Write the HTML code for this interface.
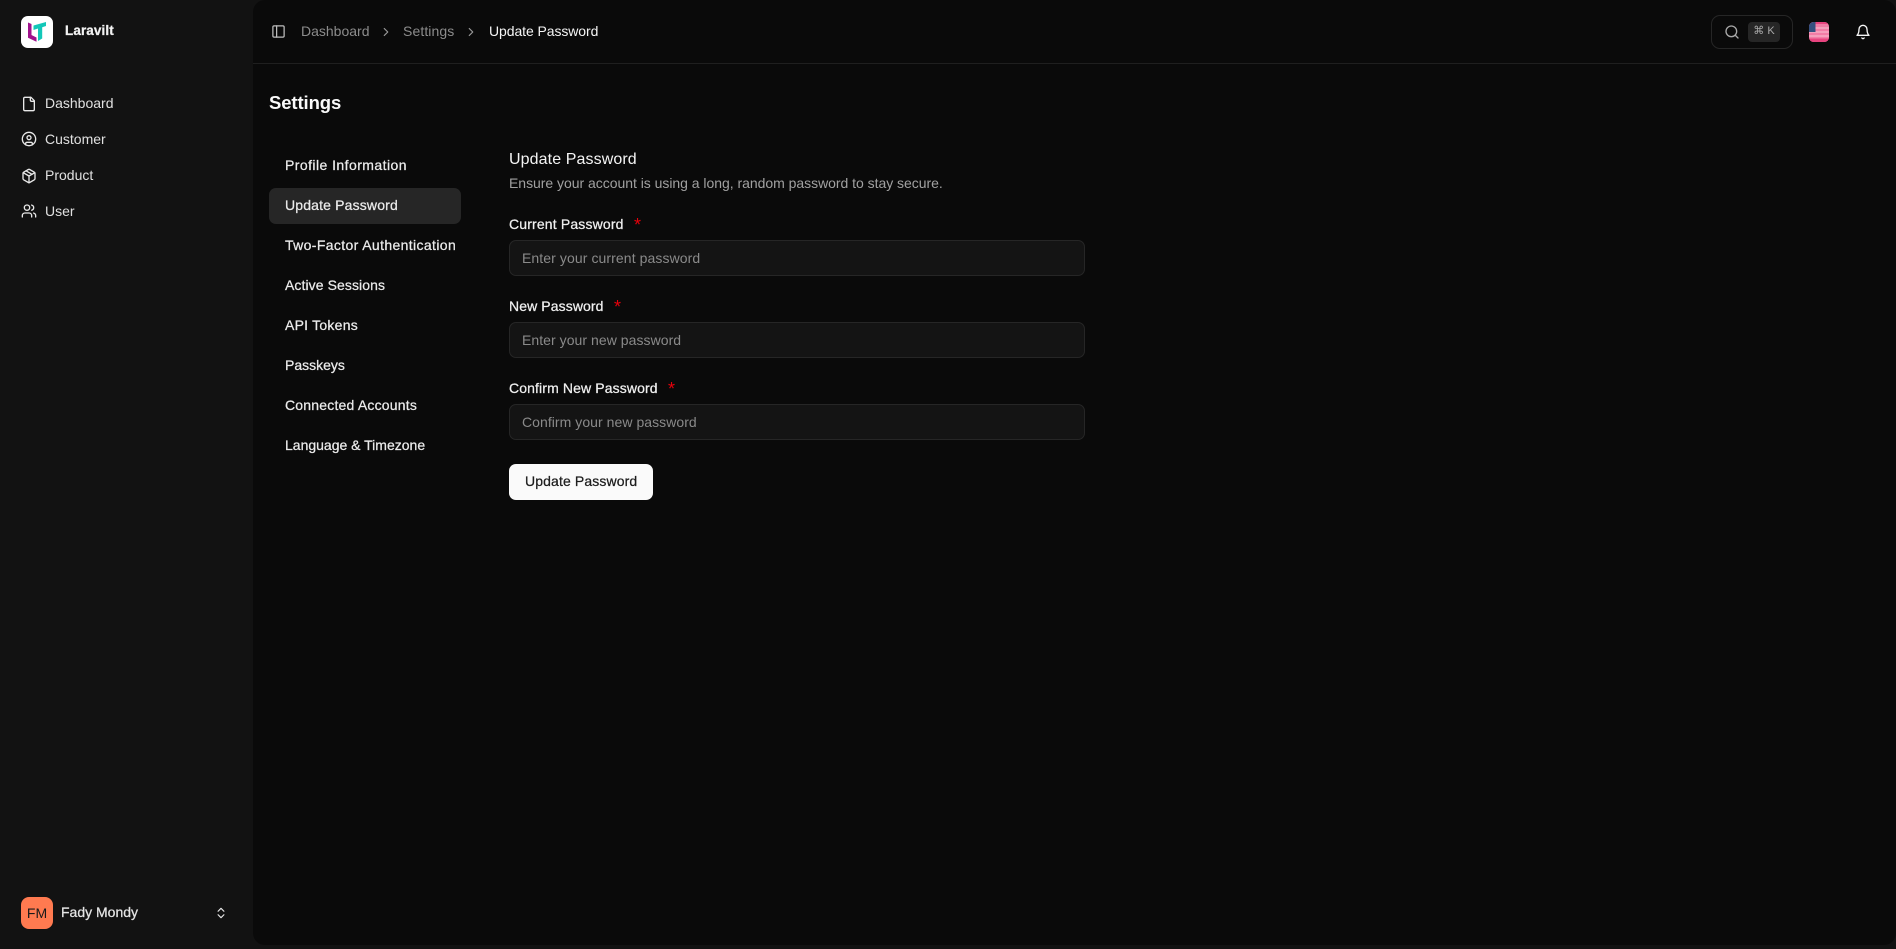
<!DOCTYPE html>
<html lang="en">
<head>
<meta charset="utf-8">
<title>Update Password</title>
<style>
html,body{margin:0;padding:0;width:1896px;height:949px;overflow:hidden;background:#121212;font-family:"Liberation Sans",sans-serif;font-size:14px;color:#fafafa}
*{box-sizing:border-box}
.t{position:absolute;white-space:nowrap;line-height:20px}
.m{-webkit-text-stroke:.25px currentColor}
svg{position:absolute;display:block;fill:none;stroke:currentColor;stroke-width:2;stroke-linecap:round;stroke-linejoin:round}
#main{position:absolute;left:253px;top:0;width:1643px;height:945px;background:#0a0a0a;border-radius:12px}
.abs{position:absolute}
.inp{position:absolute;left:509px;width:576px;height:36px;background:#141414;border:1px solid #262626;border-radius:7px}
.ph{color:#8a8a8a}
.req{color:#e7000b;font-size:18px}
.sub{left:285px;color:#ebebeb}
.nav{left:45px;color:#e0e0e0}
.ic{color:#e8e8e8}
</style>
</head>
<body>
<div id="main"></div>
<div class="abs" style="left:253px;top:63px;width:1643px;height:1px;background:#1f1f1f"></div>

<!-- sidebar -->
<div class="abs" style="left:21px;top:16px;width:32px;height:32px;background:#fff;border-radius:7px"></div>
<svg style="left:21px;top:16px;stroke:none" width="32" height="32" viewBox="21 16 32 32">
<polygon points="28,22.5 31.5,24 31.5,35 36.5,37.5 36.5,41.7 28,37.7" fill="#a0128c"/>
<polygon points="33.5,25.5 46,22 46,26 42.2,27.3 42.2,38.5 38,41 38,28.5 33.5,30" fill="#12c7b8"/>
</svg>
<div class="t m" style="left:65px;top:21px;color:#f2f2f2;font-weight:700;font-size:13.5px;letter-spacing:.1px">Laravilt</div>

<svg class="ic" style="left:21px;top:96px" width="16" height="16" viewBox="0 0 24 24"><path d="M15 2H6a2 2 0 0 0-2 2v16a2 2 0 0 0 2 2h12a2 2 0 0 0 2-2V7Z"/><path d="M14 2v4a2 2 0 0 0 2 2h4"/></svg>
<div class="t nav" style="top:93px">Dashboard</div>
<svg class="ic" style="left:21px;top:131px" width="16" height="16" viewBox="0 0 24 24"><circle cx="12" cy="12" r="10"/><circle cx="12" cy="10" r="3"/><path d="M7 20.7v-1.7a2 2 0 0 1 2-2h6a2 2 0 0 1 2 2v1.7"/></svg>
<div class="t nav" style="top:129px">Customer</div>
<svg class="ic" style="left:21px;top:168px" width="16" height="16" viewBox="0 0 24 24"><path d="M21 8a2 2 0 0 0-1-1.73l-7-4a2 2 0 0 0-2 0l-7 4A2 2 0 0 0 3 8v8a2 2 0 0 0 1 1.73l7 4a2 2 0 0 0 2 0l7-4A2 2 0 0 0 21 16Z"/><path d="M12 22V12"/><path d="m3.3 7 8.7 5 8.7-5"/><path d="m7.5 4.27 9 5.15"/></svg>
<div class="t nav" style="top:165px">Product</div>
<svg class="ic" style="left:21px;top:203px" width="16" height="16" viewBox="0 0 24 24"><path d="M16 21v-2a4 4 0 0 0-4-4H6a4 4 0 0 0-4 4v2"/><circle cx="9" cy="7" r="4"/><path d="M22 21v-2a4 4 0 0 0-3-3.87"/><path d="M16 3.13a4 4 0 0 1 0 7.75"/></svg>
<div class="t nav" style="top:201px">User</div>

<div class="abs" style="left:21px;top:897px;width:32px;height:32px;background:#ff7a50;border-radius:8px;text-align:center;line-height:32px;color:#1a1a1a;font-size:14px">FM</div>
<div class="t m" style="left:61px;top:902px;color:#e4e4e4;font-size:14px">Fady Mondy</div>
<svg class="ic" style="left:214px;top:905px" width="14" height="16" viewBox="0 0 24 24"><path d="m7 15 5 5 5-5"/><path d="m7 9 5-5 5 5"/></svg>

<!-- header -->
<svg style="left:271px;top:24px;color:#bdbdbd" width="15" height="15" viewBox="0 0 24 24"><rect x="3" y="3" width="18" height="18" rx="2"/><path d="M9 3v18"/></svg>
<div class="t" style="left:301px;top:21px;color:#8c8c8c">Dashboard</div>
<svg style="left:379px;top:25px;color:#9a9a9a" width="14" height="14" viewBox="0 0 24 24"><path d="m9 18 6-6-6-6"/></svg>
<div class="t" style="left:403px;top:21px;color:#8c8c8c;letter-spacing:.1px">Settings</div>
<svg style="left:464px;top:25px;color:#9a9a9a" width="14" height="14" viewBox="0 0 24 24"><path d="m9 18 6-6-6-6"/></svg>
<div class="t" style="left:489px;top:21px;color:#f5f5f5;letter-spacing:-.08px">Update Password</div>

<div class="abs" style="left:1711px;top:15px;width:82px;height:34px;border:1px solid #262626;border-radius:9px"></div>
<svg style="left:1724px;top:24px;color:#a8a8a8" width="16" height="16" viewBox="0 0 24 24"><circle cx="11" cy="11" r="8"/><path d="m21 21-4.3-4.3"/></svg>
<div class="abs" style="left:1748px;top:22px;width:32px;height:20px;background:#262626;border-radius:4px;color:#a8a8a8;font-size:11px;line-height:19px;text-align:center;font-family:'Liberation Sans','DejaVu Sans',sans-serif">⌘ K</div>

<svg style="left:1809px;top:22px;stroke:none" width="20" height="20" viewBox="0 0 20 20">
<defs><clipPath id="c"><rect width="20" height="20" rx="4.5"/></clipPath></defs>
<g clip-path="url(#c)">
<rect width="20" height="20" fill="#f27da6"/>
<rect y="0" width="20" height="2" fill="#e8447f"/>
<rect y="5" width="20" height="2" fill="#f59fbc"/>
<rect y="9" width="20" height="2" fill="#f59fbc"/>
<rect y="13" width="20" height="2" fill="#f59fbc"/>
<rect y="16.5" width="20" height="3.5" fill="#e8447f"/>
<rect width="6.5" height="10" fill="#34507f"/>
</g></svg>
<svg style="left:1855px;top:24px;color:#f5f5f5" width="16" height="16" viewBox="0 0 24 24"><path d="M6 8a6 6 0 0 1 12 0c0 7 3 9 3 9H3s3-2 3-9"/><path d="M10.3 21a1.9 1.9 0 0 0 3.4 0"/></svg>

<!-- page -->
<div class="t" style="left:269px;top:91px;font-size:18.5px;line-height:24px;color:#fafafa;font-weight:700;letter-spacing:-.1px">Settings</div>

<div class="abs" style="left:269px;top:188px;width:192px;height:36px;background:#262626;border-radius:7px"></div>
<div class="t m sub" style="top:155px;letter-spacing:.44px">Profile Information</div>
<div class="t m sub" style="top:195px;letter-spacing:.16px">Update Password</div>
<div class="t m sub" style="top:235px;letter-spacing:.37px">Two-Factor Authentication</div>
<div class="t m sub" style="top:275px;letter-spacing:.08px">Active Sessions</div>
<div class="t m sub" style="top:315px;letter-spacing:.24px">API Tokens</div>
<div class="t m sub" style="top:355px">Passkeys</div>
<div class="t m sub" style="top:395px;letter-spacing:.2px">Connected Accounts</div>
<div class="t m sub" style="top:435px">Language &amp; Timezone</div>

<div class="t" style="left:509px;top:150px;font-size:16px;color:#f5f5f5;letter-spacing:.1px">Update Password</div>
<div class="t" style="left:509px;top:173px;color:#a1a1a1;letter-spacing:-.03px">Ensure your account is using a long, random password to stay secure.</div>

<div class="t m" style="left:509px;top:214px;color:#f0f0f0;letter-spacing:.16px">Current Password</div>
<div class="t req" style="left:634px;top:215px">*</div>
<div class="inp" style="top:240px"></div>
<div class="t ph" style="left:522px;top:248px;letter-spacing:.09px">Enter your current password</div>

<div class="t m" style="left:509px;top:296px;color:#f0f0f0;letter-spacing:.1px">New Password</div>
<div class="t req" style="left:614px;top:297px">*</div>
<div class="inp" style="top:322px"></div>
<div class="t ph" style="left:522px;top:330px;letter-spacing:.05px">Enter your new password</div>

<div class="t m" style="left:509px;top:378px;color:#f0f0f0;letter-spacing:.12px">Confirm New Password</div>
<div class="t req" style="left:668px;top:379px">*</div>
<div class="inp" style="top:404px"></div>
<div class="t ph" style="left:522px;top:412px;letter-spacing:.05px">Confirm your new password</div>

<div class="abs" style="left:509px;top:464px;width:144px;height:36px;background:#fafafa;border-radius:7px"></div>
<div class="t m" style="left:525px;top:471px;color:#1c1c1c;letter-spacing:.12px">Update Password</div>
</body>
</html>
